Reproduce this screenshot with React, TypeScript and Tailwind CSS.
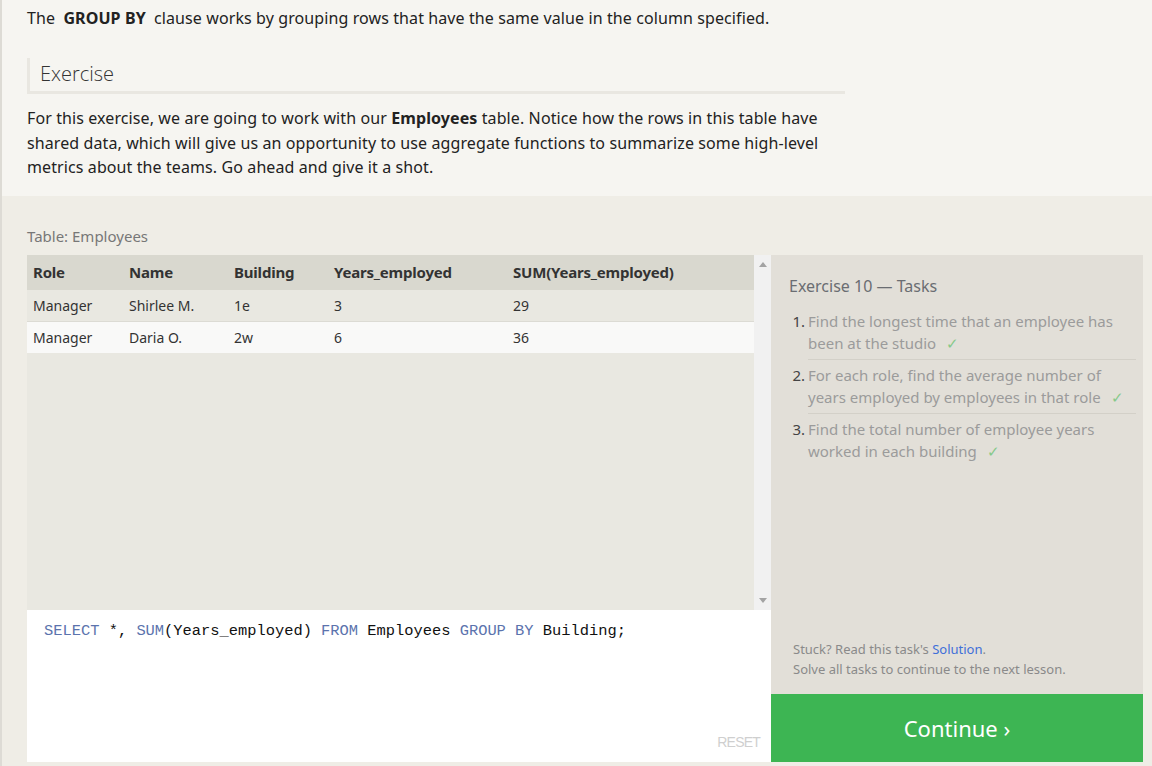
import React from "react";

const KW = ({ children }: { children: React.ReactNode }) => (
  <span className="text-[#5b73ad]">{children}</span>
);

const Check = () => <span className="ml-[10px] text-[#86c98a]">✓</span>;

export default function App() {
  const rows = [
    ["Manager", "Shirlee M.", "1e", "3", "29"],
    ["Manager", "Daria O.", "2w", "6", "36"],
  ];
  const widths = ["w-[96px]", "w-[105px]", "w-[100px]", "w-[179px]", "flex-1"];
  const tasks = [
    "Find the longest time that an employee has been at the studio",
    "For each role, find the average number of years employed by employees in that role",
    "Find the total number of employee years worked in each building",
  ];
  return (
    <div className="h-[766px] w-[1152px] overflow-hidden border-l-2 border-[#dddbd5] bg-[#efede6] font-['Noto_Sans',sans-serif] text-[#222]">
      {/* top */}
      <div className="h-[196px] bg-[#f6f5f1] pl-[25px] pt-[6px]">
        <p className="text-[16px] leading-[24px] tracking-[0.1px]">
          The <b className="mx-[4px] font-bold">GROUP BY</b> clause works by grouping rows that have the same value in the column specified.
        </p>
        <div className="mt-[28px] h-[36px] w-[818px] border-b-[3px] border-l-[3px] border-[#e9e7e1] pl-[10px]">
          <h3 className="text-[20px] font-light leading-[32px] text-[#333] font-['Open_Sans',sans-serif]">Exercise</h3>
        </div>
        <p className="mt-[12px] w-[810px] text-[16px] leading-[24.5px] tracking-[0.1px]">
          For this exercise, we are going to work with our <b className="font-bold">Employees</b> table. Notice how the rows in this table have shared data, which will give us an opportunity to use aggregate functions to summarize some high-level metrics about the teams. Go ahead and give it a shot.
        </p>
      </div>

      {/* bottom */}
      <div className="pl-[25px] pt-[30px]">
        <div className="h-[20px] text-[15px] leading-[20px] text-[#777]">Table: Employees</div>
        <div className="mt-[9px] flex">
          {/* left column */}
          <div className="flex w-[744px] flex-col">
            <div className="flex h-[355px]">
              <div className="flex-1 bg-[#e9e8e1]">
                <div className="flex h-[35px] items-center bg-[#d9d8cf] text-[15px] font-bold tracking-[-0.2px] text-[#333]">
                  {["Role", "Name", "Building", "Years_employed", "SUM(Years_employed)"].map((h, i) => (
                    <div key={h} className={`${widths[i]} pl-[6px]`}>{h}</div>
                  ))}
                </div>
                {rows.map((r, ri) => (
                  <div
                    key={ri}
                    className={`flex items-center text-[14px] text-[#333] ${ri === 0 ? "h-[32px] border-b border-[#dcdbd4] bg-[#e9e8e1]" : "h-[31px] bg-[#f9f9f8]"}`}
                  >
                    {r.map((c, i) => (
                      <div key={i} className={`${widths[i]} pl-[6px]`}>{c}</div>
                    ))}
                  </div>
                ))}
              </div>
              <div className="flex w-[17px] flex-col items-center justify-between bg-[#f1f1f1] py-[7px]">
                <svg width="8" height="5" viewBox="0 0 8 5"><path d="M0 5 L4 0 L8 5 Z" fill="#a3a3a3" /></svg>
                <svg width="8" height="5" viewBox="0 0 8 5"><path d="M0 0 L4 5 L8 0 Z" fill="#a3a3a3" /></svg>
              </div>
            </div>
            <div className="relative h-[152px] bg-white pl-[17px] pt-[10px]">
              <pre className="font-['Liberation_Mono',monospace] text-[15.4px] leading-[22px] text-[#111]">
                <KW>SELECT</KW> *, <KW>SUM</KW>(Years_employed) <KW>FROM</KW> Employees <KW>GROUP BY</KW> Building;
              </pre>
              <div className="absolute bottom-[9px] right-[11px] text-[14px] uppercase tracking-[-0.8px] text-[#cfcfcf] font-['Liberation_Sans_Narrow','Liberation_Sans',sans-serif]">
                RESET
              </div>
            </div>
          </div>

          {/* right column */}
          <div className="flex w-[372px] flex-col">
            <div className="flex h-[439px] flex-col bg-[#e2dfd8] pl-[18px] pr-[7px] pt-[20px]">
              <div className="text-[16px] leading-[22px] text-[#6a6d72]">Exercise 10 — Tasks</div>
              <ol className="mt-[13px] text-[15px] leading-[22px] text-[#9b9b9b]">
                {tasks.map((t, i) => (
                  <li key={i} className="flex">
                    <span className={`w-[19px] shrink-0 pr-[3px] text-right text-[#444] ${i > 0 ? "pt-[4px]" : ""}`}>{i + 1}.</span>
                    <span className={`flex-1 ${i < 2 ? "border-b border-[#d3d0c8] pb-[5px]" : ""} ${i > 0 ? "pt-[4px]" : ""}`}>
                      {t}
                      <Check />
                    </span>
                  </li>
                ))}
              </ol>
              <div className="mt-auto pb-[15px] pl-[4px] text-[13px] leading-[20px] text-[#8a8a8a]">
                <div>
                  Stuck? Read this task's <span className="text-[#3f6fd9]">Solution</span>.
                </div>
                <div>Solve all tasks to continue to the next lesson.</div>
              </div>
            </div>
            <div className="flex h-[68px] items-center justify-center bg-[#3db553] text-[22px] text-white">
              Continue ›
            </div>
          </div>
        </div>
      </div>
    </div>
  );
}
